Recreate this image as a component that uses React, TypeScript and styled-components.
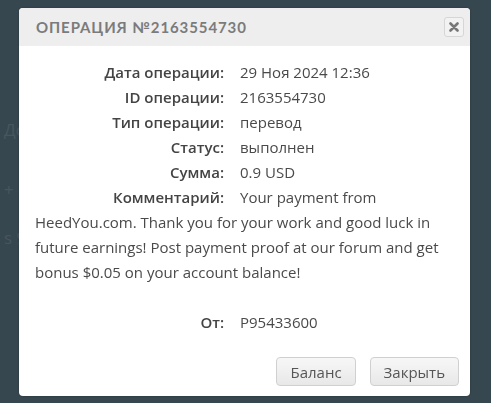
import React from 'react';
import styled, { createGlobalStyle } from 'styled-components';

const GlobalStyle = createGlobalStyle`
	html, body {
		margin: 0;
		padding: 0;
		background: #37474f;
	}
	* {
		box-sizing: border-box;
	}
`;

type Row = {
	label: string;
	value: string;
};

const rows: Row[] = [
	{ label: 'Дата операции:', value: '29 Ноя 2024 12:36' },
	{ label: 'ID операции:', value: '2163554730' },
	{ label: 'Тип операции:', value: 'перевод' },
	{ label: 'Статус:', value: 'выполнен' },
	{ label: 'Сумма:', value: '0.9 USD' },
	{
		label: 'Комментарий:',
		value:
			'Your payment from HeedYou.com. Thank you for your work and good luck in future earnings! Post payment proof at our forum and get bonus $0.05 on your account balance!',
	},
];

export const App = () => {
	return (
		<>
			<GlobalStyle />
			<Page>
				<PageLine top={118}>Дополнительно</PageLine>
				<PageLine top={37}>+ 0.05 USD</PageLine>
				<PageLine top={25}>s 9 операций</PageLine>
			</Page>
			<Overlay>
				<Modal>
					<Header>
						<Title>Операция №2163554730</Title>
						<Close aria-label="close">
							<svg width="10" height="10" viewBox="0 0 10 10">
								<path d="M1.5 1.5 L8.5 8.5 M8.5 1.5 L1.5 8.5" stroke="#777" strokeWidth="2.6" strokeLinecap="round" />
							</svg>
						</Close>
					</Header>
					<Body>
						{rows.map(r => (
							<Line key={r.label}>
								<Label>{r.label}</Label>
								{r.value}
							</Line>
						))}
						<Spacer />
						<Line>
							<Label>От:</Label>
							P95433600
						</Line>
					</Body>
					<Footer>
						<Button>Баланс</Button>
						<Button>Закрыть</Button>
					</Footer>
				</Modal>
			</Overlay>
		</>
	);
};

const Page = styled.div`
	width: 19px;
	overflow: hidden;
	padding: 0 0 0 4px;
	font-family: 'Open Sans', sans-serif;
	font-size: 17px;
	color: #47565e;
`;

const PageLine = styled.div<{ top: number }>`
	margin-top: ${props => props.top}px;
	white-space: nowrap;
`;

const Overlay = styled.div`
	position: fixed;
	inset: 0;
	padding: 8px 21px 0 19px;
`;

const Modal = styled.div`
	width: 451px;
	height: 388px;
	display: flex;
	flex-direction: column;
	background: #ffffff;
	border-radius: 4px;
	overflow: hidden;
	box-shadow: 0 0 2px rgba(0, 0, 0, 0.3);
`;

const Header = styled.div`
	height: 38px;
	flex: none;
	display: flex;
	align-items: center;
	justify-content: space-between;
	padding: 0 6px 0 17px;
	background: #eeeeee;
`;

const Title = styled.h3`
	margin: 0;
	font-family: 'Lato', sans-serif;
	font-weight: 700;
	font-size: 15px;
	letter-spacing: 0.9px;
	text-transform: uppercase;
	color: #7b7b7b;
`;

const Close = styled.button`
	width: 20px;
	height: 20px;
	padding: 0;
	display: flex;
	align-items: center;
	justify-content: center;
	border: 1px solid #d6d6d6;
	border-radius: 3px;
	background: #f2f2f2;
`;

const Body = styled.div`
	flex: 1;
	padding: 14px 16px 0 16px;
	font-family: 'Open Sans', sans-serif;
	font-size: 15px;
	line-height: 25px;
	color: #4a4a4a;
`;

const Line = styled.div``;

const Label = styled.span`
	display: inline-block;
	width: 189px;
	margin-right: 16px;
	text-align: right;
	font-weight: 600;
	color: #444444;
`;

const Spacer = styled.div`
	height: 25px;
`;

const Footer = styled.div`
	flex: none;
	display: flex;
	justify-content: flex-end;
	gap: 14px;
	padding: 0 11px 10px 0;
`;

const Button = styled.button`
	height: 29px;
	padding: 0 13px;
	font-family: 'Open Sans', sans-serif;
	font-size: 15px;
	color: #555555;
	border: 1px solid #d0d0d0;
	border-radius: 4px;
	background: linear-gradient(#f7f7f7, #e8e8e8);
`;

export default App;
